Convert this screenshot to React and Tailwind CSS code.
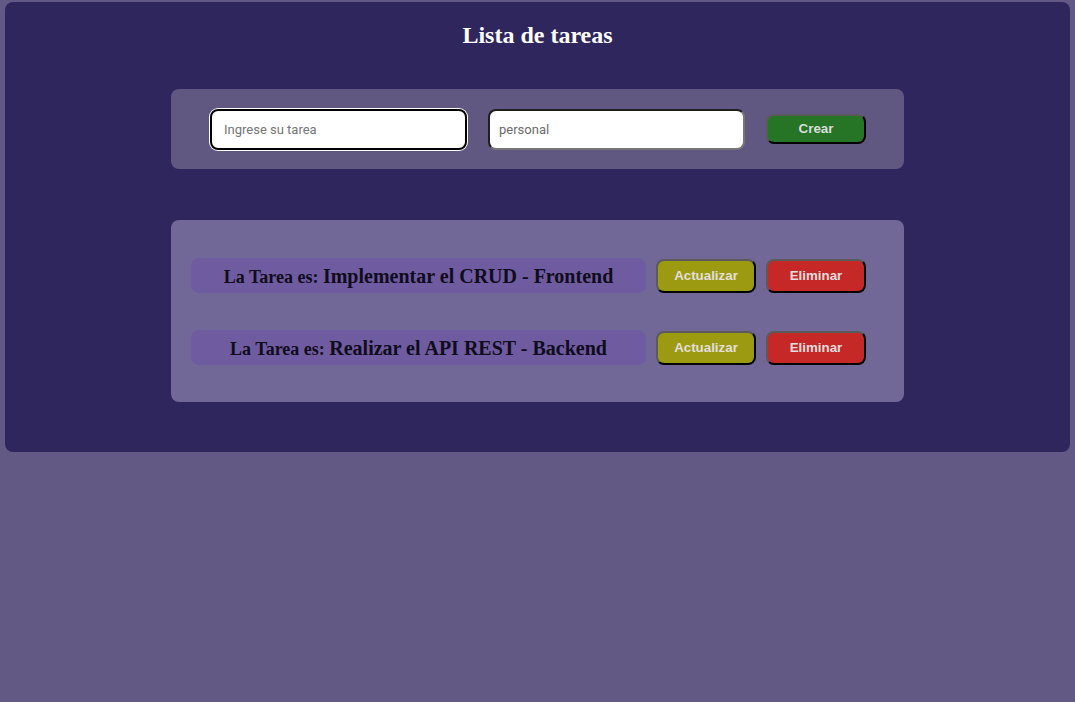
const tasks = [
  { id: 1, title: 'Implementar el CRUD - Frontend' },
  { id: 2, title: 'Realizar el API REST - Backend' },
]

function ActionButton({ children, className }) {
  return (
    <button
      className={
        'h-[34px] w-[100px] rounded-lg border-2 border-t-[#5a5a5a] border-l-[#5a5a5a] border-r-black border-b-black text-[13.33px] font-bold text-[#e4dede] ' +
        className
      }
      style={{ fontFamily: '"Liberation Sans", Arial, sans-serif' }}
    >
      {children}
    </button>
  )
}

export default function App() {
  return (
    <div className="min-h-[702px] bg-[#625a84] px-[5px] pt-[2px]">
      <div className="rounded-lg bg-[#30265e] pb-[50px]">
        <h1
          className="pt-[19px] text-center text-[24px] font-bold leading-[28px] text-white"
          style={{ fontFamily: '"Liberation Serif", "Times New Roman", serif' }}
        >
          Lista de tareas
        </h1>

        <div className="mx-auto mt-[40px] flex h-[80px] w-[733px] items-center rounded-lg bg-[#615882] pl-[39px]">
          <input
            placeholder="Ingrese su tarea"
            className="h-[41px] w-[257px] rounded-lg border-2 border-black bg-white px-3 text-[13px] text-gray-700 outline-none ring-1 ring-white placeholder:text-[#757575]"
            style={{ fontFamily: 'Roboto, Arial, sans-serif' }}
          />
          <input
            defaultValue="personal"
            className="ml-[21px] h-[41px] w-[257px] rounded-lg border-2 border-t-[#1f1f1f] border-l-[#1f1f1f] border-r-[#767676] border-b-[#767676] bg-white px-[9px] text-[13px] text-[#6b6b6b] outline-none"
            style={{ fontFamily: 'Roboto, Arial, sans-serif' }}
          />
          <button
            className="ml-[21px] h-[30px] w-[100px] rounded-lg border-2 border-t-[#5a5a5a] border-l-[#5a5a5a] border-r-black border-b-black bg-[#267526] text-[13.33px] font-bold text-[#dcdcdc]"
            style={{ fontFamily: '"Liberation Sans", Arial, sans-serif' }}
          >
            Crear
          </button>
        </div>

        <div className="mx-auto mt-[51px] flex w-[733px] flex-col gap-[37px] rounded-lg bg-[#726898] pt-[38px] pb-[37px] pl-[20px]">
          {tasks.map((t) => (
            <div key={t.id} className="flex items-center">
              <div className="flex h-[35px] w-[455px] items-center justify-center rounded-lg bg-[#6f5ba0]">
                <p
                  className="font-bold leading-none text-[#100c1c]"
                  style={{ fontFamily: '"Liberation Serif", "Times New Roman", serif' }}
                >
                  <span className="text-[18px]">La Tarea es: </span>
                  <span className="text-[20px]">{t.title}</span>
                </p>
              </div>
              <ActionButton className="ml-[10px] bg-[#9c9a10]">Actualizar</ActionButton>
              <ActionButton className="ml-[10px] bg-[#c62828]">Eliminar</ActionButton>
            </div>
          ))}
        </div>
      </div>
    </div>
  )
}
